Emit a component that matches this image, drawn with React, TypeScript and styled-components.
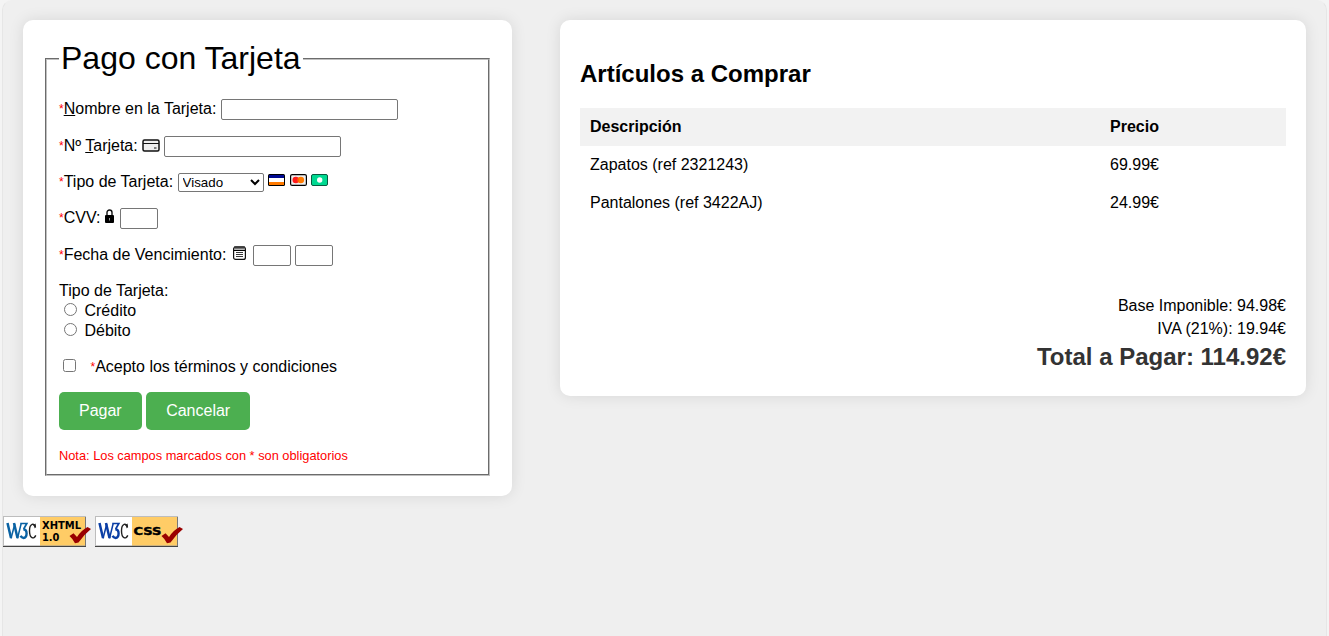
import React from "react";
import styled, { createGlobalStyle } from "styled-components";

const GlobalStyle = createGlobalStyle`
  body {
    margin: 0;
    background: #f4f4f4;
    font-family: Arial, "Liberation Sans", sans-serif;
    font-size: 16px;
    color: #000;
  }
`;

const Page = styled.div`
  box-sizing: border-box;
  height: 636px;
  margin: 0 2px;
  border: 1px solid #e6e6e6;
  border-top-color: #efefef;
  border-bottom: 0;
  border-radius: 10px 10px 0 0;
  background: #efefef;
  overflow: hidden;
`;

const Columns = styled.main`
  display: flex;
  align-items: flex-start;
  justify-content: space-between;
  padding: 19px 20px 0;
`;

const Card = styled.section<{ $width: number; $height: number }>`
  box-sizing: border-box;
  width: ${(p) => p.$width}px;
  height: ${(p) => p.$height}px;
  padding: 20px;
  border-radius: 10px;
  background: #fff;
  box-shadow: 0 0 15px rgba(0, 0, 0, 0.1);
`;

const Fieldset = styled.fieldset`
  box-sizing: border-box;
  height: 436px;
  margin: 0 2px;
  padding: 5.6px 12px 10px;
  border: 2px groove rgb(192, 192, 192);
`;

const Legend = styled.legend`
  padding: 0 2px;
  font-size: 32px;
  line-height: 37px;
`;

const Row = styled.p<{ $h?: number; $mt?: number }>`
  height: ${(p) => p.$h ?? 21}px;
  margin: ${(p) => p.$mt ?? 16}px 0 0;
  white-space: nowrap;
`;

const Star = styled.span`
  color: red;
  font-size: 12px;
  line-height: 0;
  vertical-align: 1px;
`;

const TextInput = styled.input<{ $width: number }>`
  box-sizing: border-box;
  width: ${(p) => p.$width}px;
  height: 21px;
  margin: 0;
  padding: 1px 2px;
  border: 1px solid #767676;
  border-radius: 2px;
  font: 13.333px Arial, "Liberation Sans", sans-serif;
`;

const Select = styled.select`
  width: 86px;
  height: 19px;
  margin: 0;
  border: 1px solid #767676;
  border-radius: 2px;
  background: #fff;
  color: #000;
  font: 13.333px Arial, "Liberation Sans", sans-serif;
`;

const Icon = styled.svg<{ $drop?: number; $space?: string }>`
  margin: ${(p) => p.$space ?? "0"};
  vertical-align: ${(p) => p.$drop ?? 0}px;
`;

const Options = styled.div`
  margin-top: 15px;
  line-height: 20px;
`;

const Option = styled.div`
  height: 20px;
`;

const Radio = styled.input`
  width: 13px;
  height: 13px;
  margin: 2px 3px 0 5px;
`;

const Checkbox = styled.input`
  width: 13px;
  height: 13px;
  margin: 2px 10px 3px 4px;
`;

const Button = styled.button`
  height: 38px;
  padding: 10px 20px;
  border: 0;
  border-radius: 5px;
  background: #4caf50;
  color: #fff;
  font: 16px Arial, "Liberation Sans", sans-serif;
`;

const Note = styled.p`
  margin: 18px 0 0;
  color: red;
  font-size: 12.8px;
  line-height: 16px;
`;

const Title = styled.h2`
  margin: 20px 0;
  font-size: 24px;
  line-height: 28px;
`;

const Table = styled.table`
  width: 100%;
  border-collapse: collapse;
  line-height: 18px;

  th,
  td {
    padding: 10px;
    text-align: left;
  }
  th {
    background: #f2f2f2;
  }
  th:first-child {
    width: 500px;
  }
`;

const Totals = styled.div`
  margin-top: 72px;
  text-align: right;
  line-height: 23px;
`;

const GrandTotal = styled.div`
  margin-top: 3px;
  color: #333;
  font-size: 24px;
  font-weight: bold;
  line-height: 28px;
`;

const Badges = styled.footer`
  display: flex;
  gap: 4px;
  padding-top: 20px;
`;

const BadgeText = styled.text`
  font: bold 10px "DejaVu Sans", sans-serif;
`;

const CardIcon = () => (
  <Icon width="18" height="13" viewBox="0 0 18 13" $drop={-1} $space="0 -1px 0 0">
    <rect x="1" y="1" width="16" height="11" rx="1.5" fill="#eee" stroke="#111" strokeWidth="1.5" />
    <path d="M1 4.5h16" stroke="#111" strokeWidth="1.1" />
    <path d="M12 9h2.5" stroke="#111" strokeWidth="1.2" />
  </Icon>
);

const VisaIcon = () => (
  <Icon width="17" height="12" viewBox="0 0 17 12" $drop={1}>
    <rect width="17" height="12" rx="1.5" fill="#000" />
    <path d="M1 1h15v3H1z" fill="#000a91" />
    <path d="M1 4h15v4H1z" fill="#fff" />
    <path d="M1 8h15v3H1z" fill="#ff7a00" />
  </Icon>
);

const MastercardIcon = () => (
  <Icon width="17" height="12" viewBox="0 0 17 12" $drop={1} $space="0 -1px 0 1px">
    <rect x=".6" y=".6" width="15.8" height="10.8" rx="1.5" fill="#eee" stroke="#000" strokeWidth="1.2" />
    <circle cx="5.8" cy="6" r="3.3" fill="#ff1b1b" />
    <circle cx="10.8" cy="6" r="3.3" fill="#ff7a00" />
    <path d="M8.3 3.9a3.3 3.3 0 0 1 0 4.3a3.3 3.3 0 0 1 0-4.3" fill="#ff5a00" />
  </Icon>
);

const CashIcon = () => (
  <Icon width="17" height="12" viewBox="0 0 17 12" $drop={1}>
    <rect x=".5" y=".5" width="16" height="11" rx="1.5" fill="#00d991" stroke="#075c40" />
    <circle cx="8.7" cy="6" r="2.7" fill="#fff" />
  </Icon>
);

const LockIcon = () => (
  <Icon width="9" height="14" viewBox="0 0 9 14" $space="0 2px 0 0">
    <path d="M2 7V3.5a2.5 2.5 0 0 1 5 0V7" fill="none" stroke="#111" strokeWidth="1.4" />
    <rect x="0" y="6" width="9" height="8" rx="1" fill="#000" />
    <path d="M4.5 9v2.5" stroke="#999" />
  </Icon>
);

const CalendarIcon = () => (
  <Icon width="13" height="14" viewBox="0 0 13 14" $space="0 2.6px 0 2px">
    <rect x=".6" y="1" width="11.8" height="12.4" rx="2" fill="#fff" stroke="#111" strokeWidth="1.2" />
    <path d="M1 1.2h11v2.4H1z" fill="#777" />
    <path d="M1 1h11M1 4.5h11" stroke="#000" />
    <path d="M3 6.5h7M3 8.5h7M3 10.5h7" stroke="#222" strokeWidth=".9" />
  </Icon>
);

const W3CBadge = ({ kind }: { kind: "xhtml" | "css" }) => {
  const blue = kind === "xhtml" ? "#0a62a3" : "#0b3ea5";
  return (
    <svg width="88" height="31" viewBox="0 0 88 31">
      <rect width="83" height="31" fill="#fff" />
      <path d="M37 1h45v29H37z" fill="#fc6" />
      <path d="M0 .5h83M.5 0v30" stroke="#bdbdbd" />
      <path d="M82.5 1v30" stroke="#777" />
      <path d="M1 29.5h81" stroke="#999" strokeOpacity=".5" />
      <path d="M0 30.5h83" stroke="#444" />
      <path d="M4.5 7L8 22M11 7L14.5 22" stroke={blue} strokeWidth="2.5" />
      <path d="M8 22.5L11.8 8M14.5 22.5L18.3 7" stroke={blue} strokeWidth="1.5" />
      <path d="M17.5 7.5h6.3L20.7 13" fill="none" stroke={blue} strokeWidth="1.7" />
      <path d="M20.3 13.2c4.5.2 4.2 8.6.2 8.8c-1.5 0-2.3-.8-2.9-2.2" fill="none" stroke={blue} strokeWidth="2.4" />
      <path d="M32.5 11.3c-1-4.8-6-4-6 3.5c0 8 4.5 8.7 6.3 4.6" fill="none" stroke="#222" strokeWidth="1.4" />
      <path d="M32.6 7.5l.4 3.2l-1.2 1.8c-.5-1.8-1-2.8-1.8-3.2z" fill="#222" />
      {kind === "xhtml" ? (
        <>
          <BadgeText x="39" y="13.3" textLength="39" lengthAdjust="spacingAndGlyphs">XHTML</BadgeText>
          <BadgeText x="39" y="24.5" textLength="17.5" lengthAdjust="spacingAndGlyphs">1.0</BadgeText>
        </>
      ) : (
        <BadgeText x="38.5" y="18.5" textLength="28" lengthAdjust="spacingAndGlyphs" stroke="#000" strokeWidth=".4">CSS</BadgeText>
      )}
      <path d="M66.5 20L70.5 17.3L74 21Q78 14.5 84.5 11L88 13Q80.5 19 75.5 26.5L72 27.3Q70 23 66.5 20Z" fill="#900" />
    </svg>
  );
};

const items = [
  { name: "Zapatos (ref 2321243)", price: "69.99€" },
  { name: "Pantalones (ref 3422AJ)", price: "24.99€" },
];

export default function App() {
  return (
    <>
      <GlobalStyle />
      <Page>
        <Columns>
          <Card $width={489} $height={476}>
            <Fieldset>
              <Legend>Pago con Tarjeta</Legend>
              <Row>
                <Star>*</Star><u>N</u>ombre en la Tarjeta: <TextInput $width={177} />
              </Row>
              <Row>
                <Star>*</Star>Nº <u>T</u>arjeta: <CardIcon /> <TextInput $width={177} />
              </Row>
              <Row $h={19}>
                <Star>*</Star>Tipo de Tarjeta:{" "}
                <Select defaultValue="Visado">
                  <option>Visado</option>
                  <option>Mastercard</option>
                  <option>Efectivo</option>
                </Select>{" "}
                <VisaIcon /> <MastercardIcon /> <CashIcon />
              </Row>
              <Row>
                <Star>*</Star>CVV: <LockIcon /> <TextInput $width={38} />
              </Row>
              <Row>
                <Star>*</Star>Fecha de Vencimiento: <CalendarIcon /> <TextInput $width={38} />{" "}
                <TextInput $width={38} />
              </Row>
              <Options>
                <Option>Tipo de Tarjeta:</Option>
                <Option><Radio type="radio" name="kind" /> Crédito</Option>
                <Option><Radio type="radio" name="kind" /> Débito</Option>
              </Options>
              <Row $h={19} $mt={16}>
                <Checkbox type="checkbox" /> <Star>*</Star>Acepto los términos y condiciones
              </Row>
              <Row $h={38} $mt={16}>
                <Button>Pagar</Button> <Button>Cancelar</Button>
              </Row>
              <Note>Nota: Los campos marcados con * son obligatorios</Note>
            </Fieldset>
          </Card>
          <Card $width={746} $height={376}>
            <Title>Artículos a Comprar</Title>
            <Table>
              <thead>
                <tr>
                  <th>Descripción</th>
                  <th>Precio</th>
                </tr>
              </thead>
              <tbody>
                {items.map((item) => (
                  <tr key={item.name}>
                    <td>{item.name}</td>
                    <td>{item.price}</td>
                  </tr>
                ))}
              </tbody>
            </Table>
            <Totals>
              <div>Base Imponible: 94.98€</div>
              <div>IVA (21%): 19.94€</div>
              <GrandTotal>Total a Pagar: 114.92€</GrandTotal>
            </Totals>
          </Card>
        </Columns>
        <Badges>
          <W3CBadge kind="xhtml" />
          <W3CBadge kind="css" />
        </Badges>
      </Page>
    </>
  );
}
